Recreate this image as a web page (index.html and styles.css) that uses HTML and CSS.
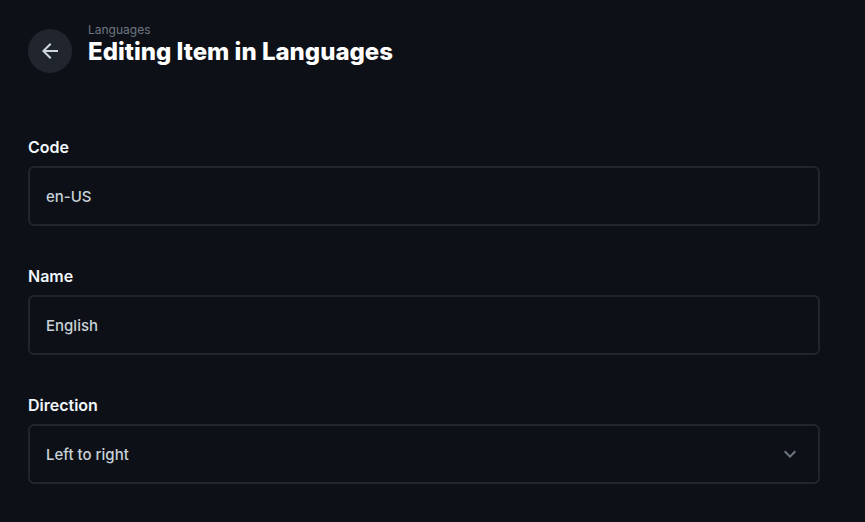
FILE: index.html
```html
<!DOCTYPE html>
<html>
<head>
<meta charset="utf-8">
<link rel="stylesheet" href="styles.css">
</head>
<body>
<div class="page">
  <header class="header">
    <button class="back" aria-label="Back">
      <svg width="24" height="24" viewBox="0 0 24 24" fill="currentColor"><path d="M20 11H7.83l5.59-5.59L12 4l-8 8 8 8 1.41-1.41L7.83 13H20v-2z"/></svg>
    </button>
    <div class="titles">
      <div class="crumb">Languages</div>
      <h1 class="title">Editing Item in Languages</h1>
    </div>
  </header>
  <form class="form">
    <div class="field">
      <div class="label">Code</div>
      <div class="input">en-US</div>
    </div>
    <div class="field">
      <div class="label">Name</div>
      <div class="input">English</div>
    </div>
    <div class="field">
      <div class="label">Direction</div>
      <div class="input select">
        <span>Left to right</span>
        <svg class="chev" width="24" height="24" viewBox="0 0 24 24" fill="currentColor"><path d="M16.59 8.59L12 13.17 7.41 8.59 6 10l6 6 6-6z"/></svg>
      </div>
    </div>
  </form>
</div>
</body>
</html>
```

FILE: styles.css
```css
html, body {
  margin: 0;
  padding: 0;
  background: #0d1117;
  font-family: Inter, "Noto Sans", sans-serif;
}
.page {
  padding: 0 45px 0 28px;
}
.header {
  display: flex;
  align-items: center;
  gap: 16px;
  padding-top: 22px;
  height: 58px;
}
.back {
  width: 44px;
  height: 44px;
  border-radius: 50%;
  border: none;
  background: #21262e;
  color: #d0d7de;
  display: flex;
  align-items: center;
  justify-content: center;
  padding: 0;
  flex: none;
}
.titles {
  display: flex;
  flex-direction: column;
  margin-top: -13px;
}
.crumb {
  font-size: 12px;
  line-height: 14px;
  color: #6e7681;
}
.title {
  margin: 0;
  font-size: 24px;
  line-height: 30px;
  font-weight: 800;
  color: #ffffff;
}
.form {
  display: flex;
  flex-direction: column;
  gap: 40px;
  padding-top: 57px;
}
.field {
  display: flex;
  flex-direction: column;
  gap: 9px;
}
.label {
  font-size: 16px;
  line-height: 20px;
  font-weight: 600;
  color: #f0f6fc;
}
.input {
  box-sizing: border-box;
  height: 60px;
  border: 2px solid #21262e;
  border-radius: 6px;
  padding: 0 16px;
  display: flex;
  align-items: center;
  font-size: 15px;
  font-weight: 500;
  color: #c9d1d9;
}
.select {
  justify-content: space-between;
}
.chev {
  color: #6e7681;
  margin-right: 0;
}
```
